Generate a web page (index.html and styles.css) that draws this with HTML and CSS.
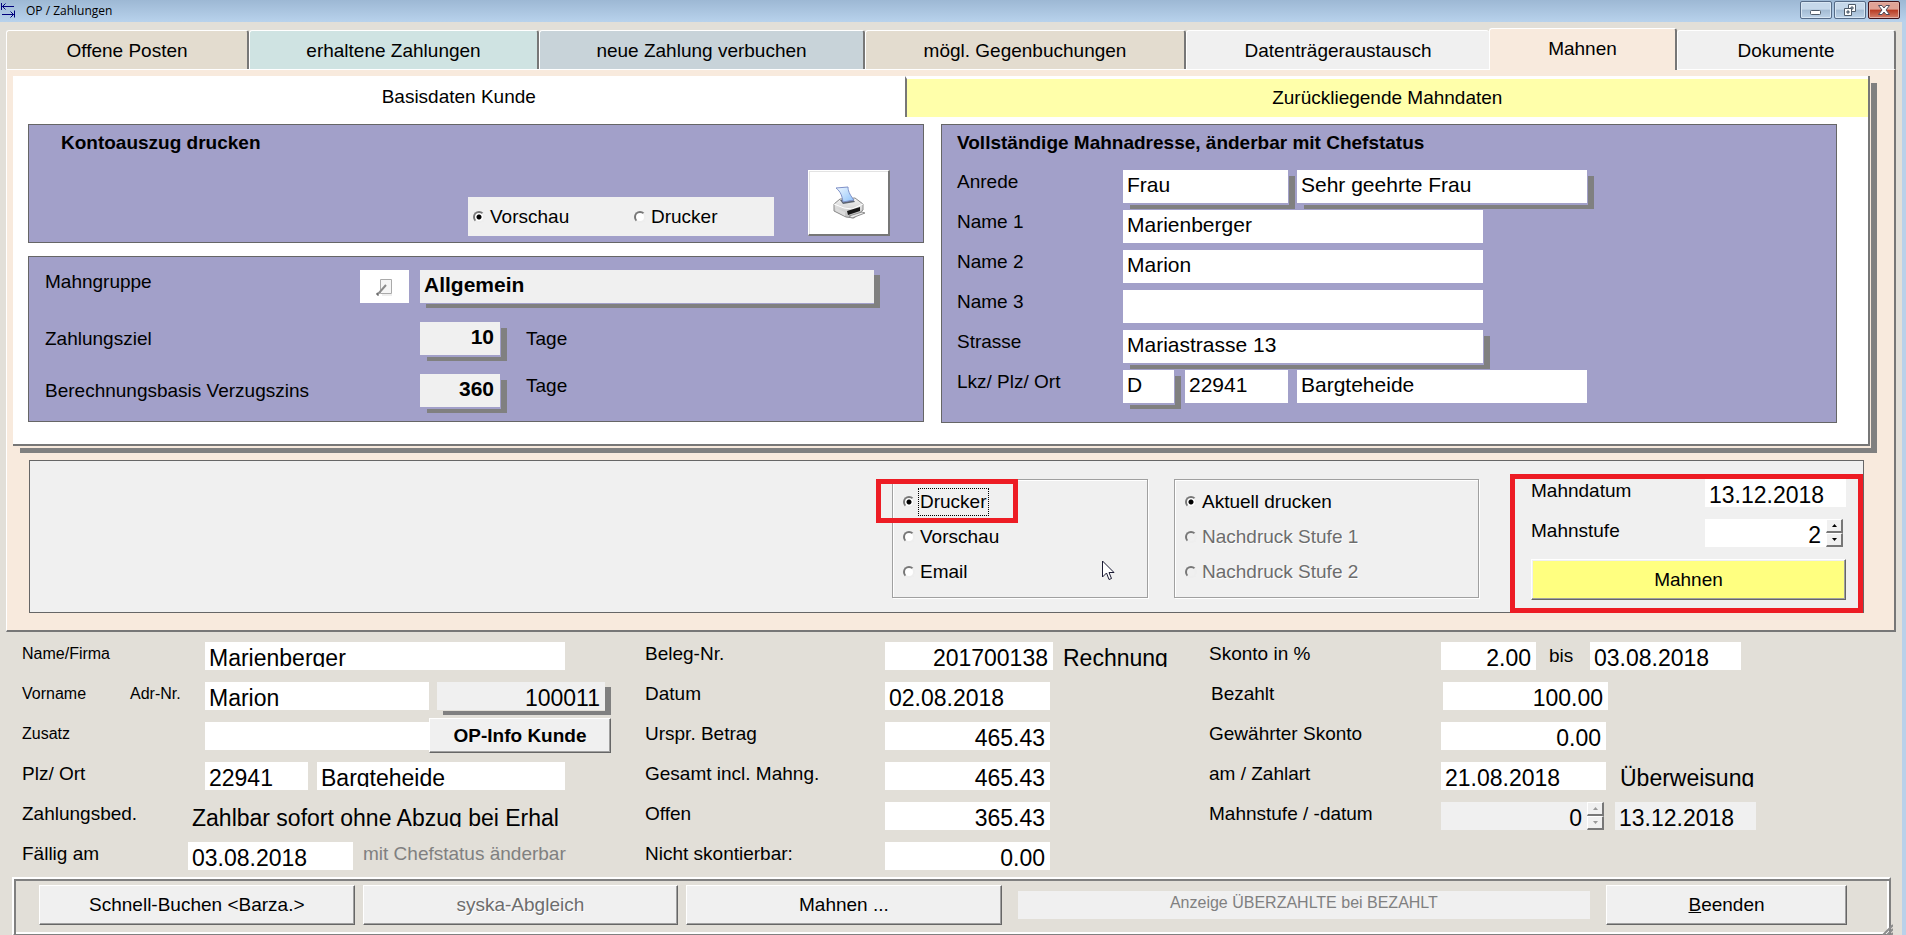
FILE: index.html
```html
<!DOCTYPE html>
<html lang="de">
<head>
<meta charset="utf-8">
<title>OP / Zahlungen</title>
<link rel="stylesheet" href="styles.css">
</head>
<body>
<header class="titlebar">
  <svg class="app-icon" width="16" height="16" viewBox="0 0 16 16" fill="none" stroke="#00007c"><path d="M1.500 1v7M2 4.500h12M5.500 1.500l-3 3 3 3M14.500 8.500v7M2 12.500h12M10.500 9.500l3 3-3 3"/></svg>
  <h1 class="window-title">OP / Zahlungen</h1>
  <button class="win-btn" aria-label="Minimieren"><svg width="12" height="12" viewBox="0 0 12 12"><rect x=".5" y="6.500" width="10" height="4" rx="1" fill="#fff" stroke="#4f5b69"/></svg></button>
  <button class="win-btn" aria-label="Wiederherstellen"><svg width="14" height="14" viewBox="0 0 14 14" fill="#fff" stroke="#4f5b69"><path d="M5.500 1.500h7v7h-7zM8 4h2v2H8z" fill-rule="evenodd"/><path d="M1.500 5.500h7v7h-7zM4 8h2v2H4z" fill-rule="evenodd"/></svg></button>
  <button class="win-btn win-close" aria-label="Schließen"><svg width="14" height="12" viewBox="0 0 14 12"><path d="M1.500 1.500h3.500L7 4l2-2.500h3.500L9 6l3.500 4.500H9L7 8l-2 2.500H1.500L5 6z" fill="#fff" stroke="#4f4a5a"/></svg></button>
</header>

<main class="window">
  <nav class="tabs">
    <button class="tab sand">Offene Posten</button>
    <button class="tab mint">erhaltene Zahlungen</button>
    <button class="tab steel">neue Zahlung verbuchen</button>
    <button class="tab sand">mögl. Gegenbuchungen</button>
    <button class="tab plain before-active">Datenträgeraustausch</button>
    <button class="tab active">Mahnen</button>
    <button class="tab plain">Dokumente</button>
  </nav>

  <section class="page">
    <div class="notebook">
      <nav class="subtabs">
        <button class="subtab">Basisdaten Kunde</button>
        <button class="subtab past">Zurückliegende Mahndaten</button>
      </nav>
      <div class="panels">
        <div class="panel-stack">
          <section class="panel">
            <h2 class="panel-title indent">Kontoauszug drucken</h2>
            <div class="statement">
              <div class="options">
                <label class="radio"><input type="radio" name="statement" checked><span>Vorschau</span></label>
                <label class="radio"><input type="radio" name="statement"><span>Drucker</span></label>
              </div>
              <button class="print-btn" aria-label="Kontoauszug drucken">
                <svg width="34" height="34" viewBox="0 0 34 34">
                  <defs><linearGradient id="sheet" x1="0" y1="0" x2="1" y2="1"><stop offset="0" stop-color="#f2f9ff"/><stop offset="1" stop-color="#8dc2fb"/></linearGradient>
                  <linearGradient id="body" x1="0" y1="0" x2="0" y2="1"><stop offset="0" stop-color="#f4f4f4"/><stop offset="1" stop-color="#bdbdbd"/></linearGradient></defs>
                  <path d="M2 18l6-5 15-1 8 6v6l-9 8-8-1-12-6z" fill="url(#body)" stroke="#8a8a8a"/>
                  <path d="M2 18l10 4 8 1 11-5" fill="none" stroke="#fff"/>
                  <path d="M8 14l3 4 12-2-3-4z" fill="#5c6470"/>
                  <path d="M4 2l12-1c0 3 1 7 6 13l-11 2C10 10 9 6 4 2z" fill="url(#sheet)" stroke="#7e90c8"/>
                  <path d="M15 25l13-4v4l-12 4z" fill="#161616"/>
                  <path d="M17 30l13-4 3 1-13 5z" fill="#ececec" stroke="#909090"/>
                  <path d="M4 22l9 4v4l-9-5z" fill="#dcdcdc"/>
                </svg>
              </button>
            </div>
          </section>
          <section class="panel terms">
            <div class="row">
              <label class="label terms-label" for="group">Mahngruppe</label>
              <button class="edit-btn" aria-label="Mahngruppe bearbeiten"><svg width="17" height="18" viewBox="0 0 17 18"><path d="M4.500 1.500h11v14h-11z" fill="#f5f5f5" stroke="#aaa"/><path d="M6 17h10" stroke="#ddd"/><path d="M1 16l2-1 7-8" fill="none" stroke="#8a8a8a" stroke-width="2"/><path d="M1 15v2h2" stroke="#555" fill="none"/></svg></button>
              <input class="field bold gray shadow tight w-group" id="group" value="Allgemein">
            </div>
            <div class="row middle">
              <label class="label terms-label wide" for="target">Zahlungsziel</label>
              <input class="field bold gray shadow num w-days" id="target" value="10">
              <span class="label unit">Tage</span>
            </div>
            <div class="row middle">
              <label class="label terms-label wide" for="basis">Berechnungsbasis Verzugszins</label>
              <input class="field bold gray shadow num w-days" id="basis" value="360">
              <span class="label unit raised">Tage</span>
            </div>
          </section>
        </div>
        <section class="panel address">
          <h2 class="panel-title">Vollständige Mahnadresse, änderbar mit Chefstatus</h2>
          <div class="address-rows">
            <div class="row"><label class="label" for="salut">Anrede</label><input class="field shadow w-salut" id="salut" value="Frau"><input class="field shadow w-greet" aria-label="Briefanrede" value="Sehr geehrte Frau"></div>
            <div class="row"><label class="label" for="name1">Name 1</label><input class="field w-name" id="name1" value="Marienberger"></div>
            <div class="row"><label class="label" for="name2">Name 2</label><input class="field w-name" id="name2" value="Marion"></div>
            <div class="row"><label class="label" for="name3">Name 3</label><input class="field w-name" id="name3" value=""></div>
            <div class="row"><label class="label" for="street">Strasse</label><input class="field shadow w-name" id="street" value="Mariastrasse 13"></div>
            <div class="row"><label class="label" for="country">Lkz/ Plz/ Ort</label><input class="field shadow w-country" id="country" value="D"><input class="field w-zip" aria-label="Plz" value="22941"><input class="field w-greet" aria-label="Ort" value="Bargteheide"></div>
          </div>
        </section>
      </div>
    </div>

    <section class="dunning">
      <div class="group output">
        <label class="radio"><input type="radio" name="output" checked><span class="focused">Drucker</span></label>
        <label class="radio"><input type="radio" name="output"><span>Vorschau</span></label>
        <label class="radio"><input type="radio" name="output"><span>Email</span></label>
        <div class="mark mark-output"></div>
        <svg class="cursor" width="14" height="21" viewBox="0 0 14 21"><path d="M1.500 1v16l4-4 2.500 6.500 2.500-1L8 12.500h5z" fill="#fff" stroke="#1a1a33"/></svg>
      </div>
      <div class="group reprint">
        <label class="radio"><input type="radio" name="reprint" checked><span>Aktuell drucken</span></label>
        <label class="radio off"><input type="radio" name="reprint" disabled><span>Nachdruck Stufe 1</span></label>
        <label class="radio off"><input type="radio" name="reprint" disabled><span>Nachdruck Stufe 2</span></label>
      </div>
      <div class="run">
        <div class="row"><label class="label" for="ddate">Mahndatum</label><input class="big w-ddate" id="ddate" value="13.12.2018"></div>
        <div class="row"><label class="label" for="dlevel">Mahnstufe</label><input class="big num w-dlevel" id="dlevel" value="2"><span class="spin"><button aria-label="Stufe erhöhen"><svg width="5" height="3" viewBox="0 0 5 3"><path d="M0 3h5L2.500 0z"/></svg></button><button aria-label="Stufe verringern"><svg width="5" height="3" viewBox="0 0 5 3"><path d="M0 0h5L2.500 3z"/></svg></button></span></div>
        <button class="btn run-btn">Mahnen</button>
        <div class="mark mark-run"></div>
      </div>
    </section>
  </section>

  <section class="record">
    <div class="col customer">
      <div class="row"><label class="label small" for="firm">Name/Firma</label><input class="big w-name" id="firm" value="Marienberger"></div>
      <div class="row"><label class="label small w-first" for="first">Vorname</label><label class="label small w-adr" for="adr">Adr-Nr.</label><input class="big w-short" id="first" value="Marion"><input class="big num gray shadow w-adrnr" id="adr" value="100011"></div>
      <div class="row"><label class="label small" for="extra">Zusatz</label><input class="big w-short flush" id="extra" value=""><button class="btn info-btn">OP-Info Kunde</button></div>
      <div class="row"><label class="label" for="zip">Plz/ Ort</label><input class="big w-zip" id="zip" value="22941"><input class="big w-city" aria-label="Ort" value="Bargteheide"></div>
      <div class="row"><label class="label w-pay" for="pay">Zahlungsbed.</label><input class="big clear w-paytext" id="pay" value="Zahlbar sofort ohne Abzug bei Erhal"></div>
      <div class="row"><label class="label w-due" for="due">Fällig am</label><input class="big w-amount" id="due" value="03.08.2018"><span class="label hint">mit Chefstatus änderbar</span></div>
    </div>
    <div class="col invoice">
      <div class="row"><label class="label" for="doc">Beleg-Nr.</label><input class="big num w-adrnr" id="doc" value="201700138"><input class="big clear w-kind" aria-label="Belegart" value="Rechnung"></div>
      <div class="row"><label class="label" for="date">Datum</label><input class="big w-amount" id="date" value="02.08.2018"></div>
      <div class="row"><label class="label" for="orig">Urspr. Betrag</label><input class="big num w-amount" id="orig" value="465.43"></div>
      <div class="row"><label class="label" for="total">Gesamt incl. Mahng.</label><input class="big num w-amount" id="total" value="465.43"></div>
      <div class="row"><label class="label" for="open">Offen</label><input class="big num w-amount" id="open" value="365.43"></div>
      <div class="row"><label class="label" for="nodisc">Nicht skontierbar:</label><input class="big num w-amount" id="nodisc" value="0.00"></div>
    </div>
    <div class="col payment">
      <div class="row"><label class="label" for="disc">Skonto in %</label><input class="big num w-pct" id="disc" value="2.00"><label class="label until" for="until">bis</label><input class="big w-until" id="until" value="03.08.2018"></div>
      <div class="row paid"><label class="label" for="paid">Bezahlt</label><input class="big num w-amount" id="paid" value="100.00"></div>
      <div class="row"><label class="label" for="granted">Gewährter Skonto</label><input class="big num w-amount" id="granted" value="0.00"></div>
      <div class="row"><label class="label" for="paydate">am / Zahlart</label><input class="big w-amount" id="paydate" value="21.08.2018"><input class="big clear w-until" aria-label="Zahlart" value="Überweisung"></div>
      <div class="row"><label class="label" for="level">Mahnstufe / -datum</label><input class="big num gray w-level" id="level" value="0" readonly><span class="spin off"><button disabled aria-label="Stufe erhöhen"><svg width="5" height="3" viewBox="0 0 5 3"><path d="M0 3h5L2.500 0z"/></svg></button><button disabled aria-label="Stufe verringern"><svg width="5" height="3" viewBox="0 0 5 3"><path d="M0 0h5L2.500 3z"/></svg></button></span><input class="big gray w-ddate" aria-label="Mahndatum" value="13.12.2018" readonly></div>
    </div>
  </section>

  <footer class="footer">
    <button class="btn action">Schnell-Buchen &lt;Barza.&gt;</button>
    <button class="btn action" disabled>syska-Abgleich</button>
    <button class="btn action">Mahnen ...</button>
    <div class="notice">Anzeige ÜBERZAHLTE bei BEZAHLT</div>
    <button class="btn close"><u>B</u>eenden</button>
    <svg class="grip" width="12" height="12" viewBox="0 0 12 12" stroke="#8c8c8c" stroke-width="2"><path d="M1 12L12 1M5 12l7-7M9 12l3-3"/></svg>
  </footer>
</main>
</body>
</html>
```
FILE: styles.css
```css
* { box-sizing: border-box; }

body {
  margin: 0;
  min-height: 100vh;
  display: flex;
  flex-direction: column;
  background: #e2dfd8;
  color: #000;
  font: 19px/24px "Liberation Sans", Arial, sans-serif;
}

button, input { font: inherit; color: inherit; margin: 0; border-radius: 0; }
button { padding: 0; }
input { outline: 0; }

/* title bar */
.titlebar {
  height: 22px;
  display: flex;
  align-items: flex-start;
  gap: 2px;
  padding: 1px 6px 0 0;
  background: linear-gradient(#9db8d4, #b8d2ec);
}
.app-icon { margin-top: 1px; }
.window-title {
  flex: 1;
  margin: 0;
  padding-left: 8px;
  font: 12px/20px "Open Sans", "Noto Sans", sans-serif;
}
.win-btn {
  width: 32px;
  height: 18px;
  display: flex;
  align-items: center;
  justify-content: center;
  border: 1px solid #566b87;
  border-radius: 2px;
  background: linear-gradient(#c6d8ea 45%, #a3bbd3 50%, #bdd3e9);
  box-shadow: inset 0 0 0 1px #d8e6f3;
}
.win-close {
  border-color: #43131a;
  background: linear-gradient(#e0a295 45%, #b83a22 50%, #d4806c);
  box-shadow: inset 0 0 0 1px #e3b0a6;
}

/* main frame */
.window {
  flex: 1;
  display: flex;
  flex-direction: column;
  border-right: 4px solid #b9d1ea;
}
.tabs {
  display: grid;
  grid-template-columns: 243fr 290fr 326fr 321fr 303fr 188fr 219fr;
  align-items: end;
  margin: 6px 6px 0;
}
.tab {
  height: 39px;
  padding-top: 2px;
  border: 0;
  border-top: 1px solid #fff;
  border-left: 1px solid #fff;
  border-right: 2px solid #777;
  border-radius: 3px 3px 0 0;
}
.sand { background: #e3dccf; }
.mint { background: #cfe3e2; }
.steel { background: #c8d3d9; }
.plain { background: #f0f0f0; }
.before-active { border-right: 0; }
.active {
  position: relative;
  height: 42px;
  margin-bottom: -1px;
  padding: 0 0 2px;
  background: #f8eadd;
}

.page {
  margin: 0 6px;
  padding: 6px 30px 17px 6px;
  background: #f8eadd;
  border: 1px solid #fff;
  border-right: 2px solid #777;
  border-bottom: 2px solid #777;
}

/* inner notebook */
.notebook {
  margin-right: -6px;
  padding-bottom: 21px;
  background: #fff;
  border-right: 2px solid #777;
  border-bottom: 2px solid #777;
  box-shadow: 1px 2px 0 #f8eadd, 7px 7px 0 #808080;
}
.subtabs { display: grid; grid-template-columns: 892fr 964fr; }
.subtab { height: 41px; border: 0; background: #fff; }
.subtab.past {
  border-left: 2px solid #777;
  border-top: 3px solid #fff;
  background: #ffffaa;
}
.panels {
  display: grid;
  grid-template-columns: 1fr 1fr;
  gap: 17px;
  padding: 7px 31px 0 15px;
}
.panel-stack { display: flex; flex-direction: column; gap: 13px; }
.panel { background: #a2a0c9; border: 1px solid #666; }
.panel-stack .panel { padding-top: 6px; }
.panel-title { margin: 0; font-size: 19px; line-height: 24px; }
.indent { padding-left: 32px; }
.statement {
  display: flex;
  justify-content: flex-end;
  align-items: flex-end;
  gap: 34px;
  padding: 15px 33px 6px 0;
}
.options {
  width: 306px;
  height: 39px;
  display: grid;
  grid-template-columns: 161px 1fr;
  align-items: center;
  padding-left: 5px;
  background: #f0f0f0;
}
.print-btn {
  width: 82px;
  height: 66px;
  display: flex;
  align-items: center;
  justify-content: center;
  background: #fff;
  border: 1px solid #fff;
  border-right: 2px solid #777;
  border-bottom: 2px solid #777;
  box-shadow: inset 1px 1px 0 #e3e3e3;
}

.panel-stack .terms {
  display: flex;
  flex-direction: column;
  gap: 19px;
  padding: 13px 16px 14px;
}
.row { display: flex; align-items: flex-start; }
.middle { align-items: center; }
.label { flex: none; white-space: nowrap; }
.terms-label { width: 315px; }
.terms-label.wide { width: 375px; }
.edit-btn {
  width: 49px;
  height: 33px;
  margin-right: 11px;
  display: flex;
  align-items: center;
  justify-content: center;
  border: 0;
  background: #fff;
}
.unit { padding-left: 26px; }
.raised { align-self: flex-start; }

.field {
  height: 33px;
  padding: 0 6px 4px 4px;
  border: 0;
  background: #fff;
  font-size: 21px;
}
.bold { font-weight: bold; }
.gray { background: #f0f0f0; }
.num { text-align: right; }
.shadow { box-shadow: 1px 2px 0 #a2a0c9, 7px 6px 0 #808080; }
.shadow.tight { box-shadow: 0 1px 0 #a2a0c9, 6px 5px 0 #808080; }
.w-group { width: 454px; }
.w-days { width: 80px; }

.address { padding: 6px 15px 19px; }
.address-rows { display: flex; flex-direction: column; gap: 7px; padding-top: 15px; }
.address .label { width: 166px; }
.w-salut { width: 165px; margin-right: 9px; }
.w-greet { width: 290px; }
.w-name { width: 360px; }
.w-country { width: 51px; margin-right: 11px; }
.w-zip { width: 103px; margin-right: 9px; }

/* radios */
.radio { display: flex; align-items: center; gap: 5px; white-space: nowrap; }
.radio input {
  appearance: none;
  width: 12px;
  height: 12px;
  border: 2px solid;
  border-color: #777 #eee #eee #777;
  border-radius: 50%;
  background: #fff;
}
.radio input:checked { background: radial-gradient(circle, #000 2px, #fff 3px); }
.radio input:disabled { background: #f0f0f0; }
.radio.off { color: #6d6d6d; text-shadow: 1px 1px 0 #fff; }
.focused { outline: 1px dotted #000; outline-offset: 1px; }

/* dunning run */
.dunning {
  display: flex;
  justify-content: flex-end;
  align-items: flex-start;
  margin: 14px 0 0 16px;
  padding: 18px 17px 12px 0;
  background: #f0f0f0;
  border: 1px solid #666;
}
.group {
  position: relative;
  height: 119px;
  display: flex;
  flex-direction: column;
  gap: 11px;
  padding: 10px 0 0 10px;
  border: 1px solid #a0a0a0;
  box-shadow: 1px 1px 0 #fff, inset 1px 1px 0 #fff;
}
.output { width: 256px; margin-right: 26px; }
.reprint { width: 305px; margin-right: 52px; }
.run { position: relative; width: 315px; }
.run .row { margin-bottom: 12px; }
.run .label { width: 174px; }
.mark { position: absolute; border: 5px solid #ed1c24; pointer-events: none; }
.mark-output { left: -17px; top: -1px; width: 142px; height: 44px; }
.mark-run { left: -21px; right: -17px; top: -5px; bottom: -13px; }
.cursor { position: absolute; left: 208px; top: 80px; }

.big {
  height: 28px;
  padding: 7px 5px 0 4px;
  border: 0 solid #fff;
  border-bottom-width: 3px;
  background: #fff;
  font-size: 23px;
}
.big.gray { background: #f0f0f0; border-color: #f0f0f0; }
.big.clear { background: transparent; border-color: transparent; }
.big.shadow { box-shadow: 0 1px 0 #e2dfd8, 6px 5px 0 #808080; }
.w-ddate { width: 141px; }
.w-dlevel { width: 121px; }
.spin { width: 17px; height: 28px; display: flex; flex-direction: column; }
.spin button {
  flex: 1;
  display: flex;
  align-items: center;
  justify-content: center;
  background: #f0f0f0;
  border: 1px solid #fff;
  border-right: 2px solid #777;
  border-bottom: 2px solid #777;
}
.spin.off path { fill: #999; }

.btn {
  background: #f0f0f0;
  border: 1px solid;
  border-color: #fff #666 #666 #fff;
  box-shadow: inset -1px -1px 0 #a0a0a0;
}
.btn:disabled { color: #6d6d6d; text-shadow: 1px 1px 0 #fff; }
.run-btn { width: 100%; height: 41px; display: block; background: #ffff80; box-shadow: inset -1px -1px 0 #a0a0a0, inset 1px 1px 0 #f0f0f0; }

/* record details */
.record {
  display: grid;
  grid-template-columns: 623fr 564fr 689fr;
  padding: 10px 4px 7px 22px;
}
.col { display: flex; flex-direction: column; gap: 12px; min-width: 0; }
.col .row { height: 28px; }
.customer .label { width: 183px; }
.small { font-size: 16px; }
.customer .w-first { width: 108px; }
.customer .w-adr { width: 75px; }
.w-short { width: 224px; margin-right: 8px; }
.w-short.flush { margin-right: 0; }
.w-adrnr { width: 168px; }
.info-btn { width: 182px; height: 35px; margin-top: -4px; font-weight: bold; position: relative; }
.w-city { width: 248px; }
.customer .w-pay { width: 166px; }
.w-paytext { width: 384px; }
.customer .w-due { width: 166px; }
.w-amount { width: 165px; }
.customer .hint { width: auto; padding-left: 10px; color: #808080; }
.invoice .label { width: 240px; }
.w-kind { width: 116px; margin-left: 6px; }
.payment .label { width: 232px; }
.payment .until { width: 54px; padding-left: 13px; line-height: 28px; }
.paid { padding-left: 2px; }
.w-pct { width: 95px; }
.w-until { width: 151px; }
.payment .clear { margin-left: 10px; }
.w-level { width: 146px; }
.payment .w-ddate { margin-left: 11px; }

/* footer */
.footer {
  position: relative;
  display: flex;
  align-items: center;
  gap: 8px;
  margin: 0 11px 0 12px;
  padding: 6px 42px 9px 25px;
  border: 2px solid;
  border-color: #fff #808080 #808080 #fff;
  box-shadow: inset 2px 2px 0 #808080, inset -2px -2px 0 #fff;
}
.action { flex: 315 1 0; height: 40px; }
.notice {
  flex: 575 1 0;
  height: 28px;
  margin: 0 8px;
  font-size: 16px;
  line-height: 24px;
  text-align: center;
  color: #808080;
  background: #f0f0f0;
}
.close { flex: 240 1 0; height: 40px; }
.grip { position: absolute; right: -4px; bottom: -2px; }
```
